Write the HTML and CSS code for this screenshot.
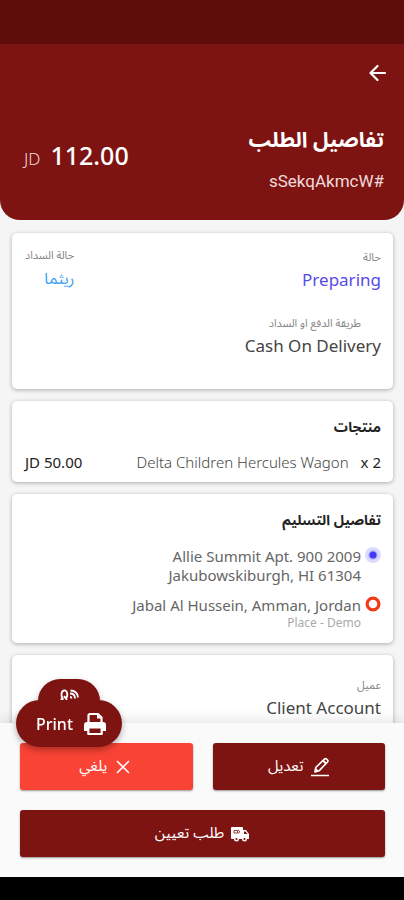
FILE: index.html
```html
<!DOCTYPE html>
<html lang="ar" dir="rtl">
<head>
<meta charset="utf-8">
<meta name="viewport" content="width=device-width, initial-scale=1">
<title>تفاصيل الطلب</title>
<link rel="stylesheet" href="styles.css">
</head>
<body>
<header class="header">
  <div class="status-bar"></div>
  <div class="toolbar">
    <button class="back" type="button" aria-label="Back">
      <svg viewBox="0 0 24 24" width="24" height="24"><path d="M20 12H5.500M12.500 5 5.500 12l7 7" fill="none" stroke="currentColor" stroke-width="2.200" stroke-linecap="round" stroke-linejoin="round"/></svg>
    </button>
  </div>
  <div class="summary">
    <div class="heading">
      <h1>تفاصيل الطلب</h1>
      <p class="order-id" dir="ltr">sSekqAkmcW#</p>
    </div>
    <p class="total" dir="ltr"><span class="currency">JD</span> <span class="amount">112.00</span></p>
  </div>
</header>

<main class="content">
  <section class="card status-card">
    <div class="split">
      <div class="field">
        <span class="label">حالة</span>
        <span class="value preparing">Preparing</span>
      </div>
      <div class="field payment">
        <span class="label">حالة السداد</span>
        <span class="value later">ريثما</span>
      </div>
    </div>
    <div class="field method">
      <span class="label indented">طريقة الدفع او السداد</span>
      <span class="value">Cash On Delivery</span>
    </div>
  </section>

  <section class="card">
    <h2>منتجات</h2>
    <div class="product">
      <span class="quantity" dir="ltr">x 2</span>
      <span class="name">Delta Children Hercules Wagon</span>
      <span class="price" dir="ltr">JD 50.00</span>
    </div>
  </section>

  <section class="card">
    <h2>تفاصيل التسليم</h2>
    <ul class="stops">
      <li>
        <svg class="dot" viewBox="0 0 16 16" width="16" height="16"><circle cx="8" cy="8" r="8" fill="#dcdcff"/><circle cx="8" cy="8" r="5" fill="#b9b7ff"/><circle cx="8" cy="8" r="3.500" fill="#4338f5"/></svg>
        <p class="address" dir="ltr">Allie Summit Apt. 900 2009<br>Jakubowskiburgh, HI 61304</p>
      </li>
      <li>
        <svg class="dot" viewBox="0 0 16 16" width="16" height="16"><circle cx="8" cy="8" r="5.900" fill="#fff" stroke="#f23b16" stroke-width="3.200"/></svg>
        <div class="place" dir="ltr">
          <p class="address">Jabal Al Hussein, Amman, Jordan</p>
          <p class="note">Place - Demo</p>
        </div>
      </li>
    </ul>
  </section>

  <section class="card client">
    <div class="field">
      <span class="label">عميل</span>
      <span class="value">Client Account</span>
    </div>
  </section>
</main>

<footer class="footer">
  <div class="print-menu">
    <button class="qr" type="button" aria-label="QR">
      <svg viewBox="0 0 20 12" width="20" height="12"><path d="M4.500 10C2 9 1.500 2 5 1.500s4.500 6 1.500 8M1.500 10.500h3M5 7l3 4M11 4.500c3 0 5 2 5 5M11.500 1.500c4.500 0 7.500 3 7.500 7M11 8c1 0 1.500.5 1.500 1.500" fill="none" stroke="currentColor" stroke-width="1.800"/></svg>
    </button>
    <button class="print" type="button" dir="ltr">
      <span>Print</span>
      <svg viewBox="0 0 24 24" width="24" height="24"><path d="M5.500 10V3.500Q5.500 2 7 2h8l3.500 3.500V10" fill="none" stroke="currentColor" stroke-width="2.200"/><path d="M14 2v4.500h4.500" fill="currentColor"/><path d="M4 10h16q3 0 3 3v6h-4v-4H5v4H1v-6q0-3 3-3z" fill="currentColor"/><path d="M5.300 15.500h13.400V22H5.300z" fill="none" stroke="currentColor" stroke-width="2.200" stroke-linejoin="round"/></svg>
    </button>
  </div>
  <div class="actions">
    <button class="action" type="button">
      <svg viewBox="0 0 20 20" width="20" height="20"><path d="M1 18.500h18" stroke="currentColor" stroke-width="1.500"/><path d="m5 15 .8-4.500L14.500 2q1-.8 2 0l1 1q.9 1 0 2L9 13.800z" fill="none" stroke="currentColor" stroke-width="1.700" stroke-linejoin="round"/><path d="m13 3.500 3.500 3.500" stroke="currentColor" stroke-width="2"/><path d="m5 15 .7-4 3.300 3z" fill="currentColor"/></svg>
      <span>تعديل</span>
    </button>
    <button class="action cancel" type="button">
      <svg viewBox="0 0 20 20" width="20" height="20"><path d="m4 4 12 12M16 4 4 16" stroke="currentColor" stroke-width="1.600"/></svg>
      <span>يلغي</span>
    </button>
    <button class="action assign" type="button">
      <svg viewBox="0 0 20 20" width="20" height="20"><path d="M2 3h10q1 0 1 1v2h3l3 4v5h-2a2.500 2.500 0 0 1-5 0H9a2.500 2.500 0 0 1-5 0H2q-1 0-1-1V4q0-1 1-1z" fill="currentColor"/><path d="M14 7.500h1.500L17.500 10H14z" fill="#7e1412"/><path d="M4 6.500h3.500V9H4zM8 6l2 1.800L8 9.500" fill="none" stroke="#7e1412" stroke-width=".8"/><circle cx="6.500" cy="15" r="1.100" fill="#7e1412"/><circle cx="14.500" cy="15" r="1.100" fill="#7e1412"/></svg>
      <span>طلب تعيين</span>
    </button>
  </div>
</footer>
<div class="system-nav"></div>
</body>
</html>
```
FILE: styles.css
```css
* {
  box-sizing: border-box;
}

body {
  margin: 0;
  height: 100vh;
  display: flex;
  flex-direction: column;
  overflow: hidden;
  background: #f5f5f5;
  color: #444;
  font-family: "Noto Sans", "Noto Sans Arabic", "DejaVu Sans", sans-serif;
}

h1,
h2,
p,
ul {
  margin: 0;
  padding: 0;
}

button {
  border: 0;
  padding: 0;
  color: #fff;
  font: inherit;
}

svg {
  display: block;
  flex: none;
}

.header {
  flex: none;
  background: #7e1412;
  color: #fff;
  border-radius: 0 0 20px 20px;
  overflow: hidden;
}

.status-bar {
  height: 44px;
  background: #5e0d0b;
}

.toolbar {
  display: flex;
  padding: 17px 15px 0;
}

.back {
  background: none;
}

.summary {
  display: flex;
  justify-content: space-between;
  align-items: center;
  padding: 36px 20px 25px 24px;
}

h1 {
  font-size: 21px;
  line-height: 36px;
  font-weight: 700;
}

.order-id {
  font-family: Roboto, sans-serif;
  font-size: 17px;
  line-height: 28px;
  padding-top: 10px;
  text-align: right;
  color: #f0dcdc;
}

.order-id,
.total {
  white-space: nowrap;
}

.total {
  display: flex;
  align-items: baseline;
  gap: 10px;
  padding-bottom: 6px;
}

.currency {
  font-size: 17px;
  font-weight: 300;
  color: #f0dcdc;
}

.amount {
  font-size: 25px;
  line-height: 36px;
  font-weight: 500;
}

.content {
  flex: 1;
  min-height: 0;
  overflow: hidden;
  padding: 13px 11px 0 12px;
  display: flex;
  flex-direction: column;
  gap: 12px;
}

.card {
  flex: none;
  background: #fff;
  border-radius: 5px;
  box-shadow: 0 1px 4px #0000004d;
  padding: 14px 12px 8px 13px;
}

.status-card {
  padding-top: 12px;
  padding-bottom: 30px;
}

.split {
  display: flex;
  justify-content: space-between;
}

.field {
  display: flex;
  flex-direction: column;
  align-items: flex-start;
}

.label {
  font-size: 11px;
  line-height: 20px;
  color: #858585;
}

.value {
  font-size: 17px;
  line-height: 26px;
}

.status-card .split > :first-child {
  padding-top: 2px;
}

.preparing {
  color: #584be8;
}

.later {
  font-size: 16px;
  color: #3ea0f5;
}

.method {
  padding-top: 20px;
}

.indented {
  padding-right: 20px;
}

h2 {
  font-size: 14px;
  line-height: 24px;
  font-weight: 700;
  color: #222;
}

.product {
  display: flex;
  align-items: center;
  padding-top: 11px;
  gap: 12px;
  font-size: 15px;
  line-height: 24px;
  white-space: nowrap;
}

.quantity,
.price {
  color: #222;
}

.name {
  flex: 1;
  font-weight: 300;
}

.stops {
  list-style: none;
  display: flex;
  flex-direction: column;
  gap: 11px;
  padding: 15px 0 4px;
}

.stops li {
  display: flex;
  gap: 4px;
}

.address {
  font-size: 15px;
  line-height: 19px;
  text-align: right;
  color: #666;
}

.note {
  font-size: 12px;
  line-height: 16px;
  text-align: right;
  color: #aaa;
}

.client {
  padding-top: 20px;
  padding-bottom: 40px;
}

.footer {
  flex: none;
  position: relative;
  background: #fafafa;
  box-shadow: 0 -2px 12px #0000001f;
  padding: 20px 19px 20px 20px;
}

.actions {
  display: grid;
  grid-template-columns: 1fr 1fr;
  gap: 20px;
}

.action {
  display: flex;
  align-items: center;
  justify-content: center;
  gap: 6px;
  height: 47px;
  border-radius: 3px;
  background: #7e1412;
  box-shadow: 0 1px 2px #00000066;
  font-size: 15px;
  line-height: 24px;
}

.action span {
  padding-bottom: 4px;
}

.cancel {
  background: #f94335;
}

.assign {
  grid-column: 1 / -1;
}

.print-menu {
  position: absolute;
  left: 16px;
  top: -44px;
  display: flex;
  flex-direction: column;
  align-items: center;
  filter: drop-shadow(0 3px 3px #0000004d);
}

.qr {
  display: flex;
  justify-content: center;
  width: 62px;
  height: 44px;
  margin-bottom: -23px;
  padding-top: 10px;
  padding-left: 0;
  border-radius: 22px;
  background: #7e1412;
}

.print {
  position: relative;
  display: flex;
  align-items: center;
  gap: 10px;
  height: 47px;
  padding: 0 15px 0 20px;
  border-radius: 24px;
  background: #7e1412;
  font-size: 16px;
  font-weight: 500;
}

.system-nav {
  flex: none;
  height: 23px;
  background: #000;
}
```
